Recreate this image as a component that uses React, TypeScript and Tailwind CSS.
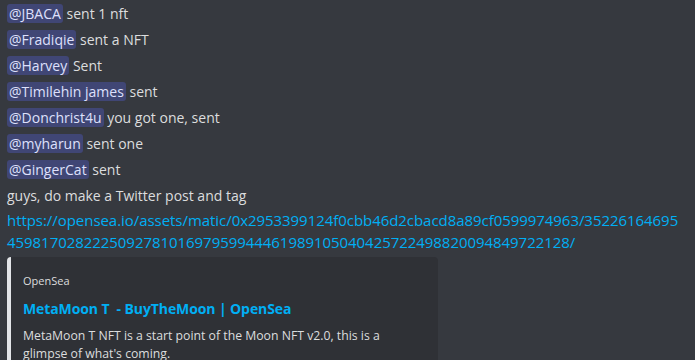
import React from "react";

const mentions: [string, string][] = [
  ["@JBACA", "sent 1 nft"],
  ["@Fradiqie", "sent a NFT"],
  ["@Harvey", "Sent"],
  ["@Timilehin james", "sent"],
  ["@Donchrist4u", "you got one, sent"],
  ["@myharun", "sent one"],
  ["@GingerCat", "sent"],
];

export default function App() {
  return (
    <div
      className="w-[695px] h-[360px] overflow-hidden bg-[#36393f] text-[#dcddde] pl-[7px] text-[14px]"
      style={{ fontFamily: '"Open Sans", "Noto Sans", sans-serif' }}
    >
      {mentions.map(([m, t]) => (
        <div key={m} className="h-[26px] flex items-center whitespace-pre">
          <span className="bg-[#404675] text-[#dee0fc] font-medium rounded-[3px] px-[2px] leading-[19px]">
            {m}
          </span>
          <span> {t}</span>
        </div>
      ))}
      <div className="h-[26px] flex items-center">guys, do make a Twitter post and tag</div>
      <div className="leading-[22px] text-[15px] tracking-[-0.05px] text-[#00aff4] pt-[1px]">
        <div>https://opensea.io/assets/matic/0x2953399124f0cbb46d2cbacd8a89cf0599974963/35226164695</div>
        <div>459817028222509278101697959944461989105040425722498820094849722128/</div>
      </div>
      <div className="mt-[4px] w-[431px] bg-[#2f3136] border-l-[4px] border-[#e3e5e8] rounded-[4px] pl-[12px] pt-[16px] pr-[16px] pb-[12px]">
        <div className="text-[11px] leading-[16px] text-[#dcddde]">OpenSea</div>
        <div className="mt-[10px] text-[14px] leading-[20px] font-bold tracking-[-0.1px] text-[#00aff4] whitespace-pre">
          {"MetaMoon T  - BuyTheMoon | OpenSea"}
        </div>
        <div className="mt-[8px] text-[12.25px] leading-[18px] text-[#dcddde]">
          MetaMoon T NFT is a start point of the Moon NFT v2.0, this is a
          <br />
          glimpse of what's coming.
        </div>
      </div>
    </div>
  );
}
